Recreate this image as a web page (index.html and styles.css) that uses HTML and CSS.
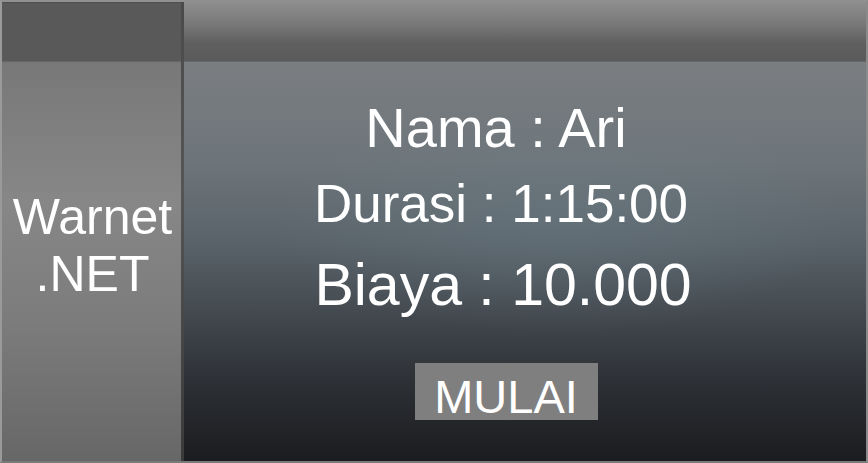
FILE: index.html
```html
<!DOCTYPE html>
<html>
<head>
<meta charset="utf-8">
<link rel="stylesheet" href="styles.css">
</head>
<body>
<div class="frame">
  <aside class="sidebar">
    <div class="side-top"></div>
    <div class="side-body">
      <div class="brand">Warnet<br>.NET</div>
    </div>
  </aside>
  <div class="divider"></div>
  <main class="main">
    <div class="main-top"></div>
    <div class="main-body">
      <div class="line nama">Nama : Ari</div>
      <div class="line durasi">Durasi : 1:15:00</div>
      <div class="line biaya">Biaya : 10.000</div>
      <div class="btn">MULAI</div>
    </div>
  </main>
</div>
</body>
</html>
```
FILE: styles.css
```css
html, body {
  margin: 0;
  padding: 0;
  background: #ffffff;
}
body {
  font-family: "Liberation Sans", Arial, sans-serif;
  color: #ffffff;
}
.frame {
  width: 868px;
  height: 463px;
  box-sizing: border-box;
  border-top: 2px solid #909090;
  border-left: 2px solid #9a9a9a;
  border-right: 2px solid #8a8a8a;
  border-bottom: 2px solid #7a7a7a;
  display: flex;
  background: #2a2c30;
}
.sidebar {
  width: 179px;
  display: flex;
  flex-direction: column;
}
.side-top {
  height: 60px;
  background: #595959;
  border-top: 1px solid #4f4f4f;
  box-sizing: border-box;
  border-bottom: 1px solid #666666;
}
.side-body {
  flex: 1;
  background: linear-gradient(180deg, #787878 0%, #878787 35%, #7c7c7c 65%, #676767 100%);
  padding-top: 127px;
  box-sizing: border-box;
}
.brand {
  text-align: center;
  font-size: 50px;
  line-height: 57px;
  padding-left: 2px;
}
.divider {
  width: 3px;
  background: linear-gradient(180deg, #4a4a4a 0%, #555555 40%, #3a3a3a 100%);
}
.main {
  flex: 1;
  display: flex;
  flex-direction: column;
}
.main-top {
  height: 60px;
  box-sizing: border-box;
  background: linear-gradient(180deg, #8e8e8e 0%, #7a7a7a 35%, #5f5f5f 70%, #5a5a5a 100%);
  border-bottom: 1px solid #666666;
}
.main-body {
  flex: 1;
  display: flex;
  flex-direction: column;
  align-items: center;
  padding-top: 34px;
  padding-right: 38px;
  box-sizing: border-box;
  background:
    radial-gradient(ellipse 60% 40% at 55% 40%, rgba(110, 130, 140, 0.35), rgba(110, 130, 140, 0) 70%),
    linear-gradient(180deg, #7b7e81 0%, #6d757a 25%, #5a636a 45%, #40464c 65%, #2b2e33 82%, #1b1c1f 100%);
}
.line {
  line-height: 1.15;
  white-space: nowrap;
}
.nama {
  font-size: 56px;
  padding-right: 20px;
}
.durasi {
  font-size: 53px;
  margin-top: 14px;
  padding-right: 10px;
}
.biaya {
  font-size: 59px;
  margin-top: 17px;
  padding-right: 6px;
}
.btn {
  margin-top: 43px;
  width: 183px;
  height: 57px;
  box-sizing: border-box;
  padding-top: 10px;
  background: #7f7f7f;
  text-align: center;
  font-size: 47px;
  line-height: 47px;
}
```
